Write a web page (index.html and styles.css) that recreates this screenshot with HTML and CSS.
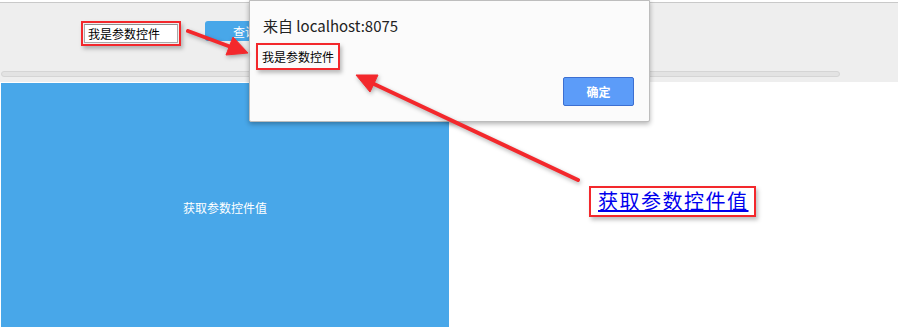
FILE: index.html
```html
<!DOCTYPE html>
<html lang="zh-CN">
<head>
    <meta charset="UTF-8">
    <title>获取参数控件值</title>
    <link rel="stylesheet" href="styles.css">
</head>
<body>

    <div class="toolbar">
        <div class="param-row">
            <span class="mark mark-input">
                <input type="text" class="param-input" value="我是参数控件">
            </span>
            <button class="query-btn">查询</button>
        </div>
        <div class="track"></div>
    </div>

    <div class="content">
        <div class="panel">获取参数控件值</div>
        <div class="link-area">
            <span class="mark mark-link"><a href="#">获取参数控件值</a></span>
        </div>
    </div>

    <!-- 浏览器 alert 弹窗 -->
    <div class="dialog">
        <div class="dialog-title">来自 localhost:8075</div>
        <div class="dialog-msg"><span class="mark mark-msg">我是参数控件</span></div>
        <div class="dialog-foot">
            <button class="ok-btn">确定</button>
        </div>
    </div>

    <!-- 标注箭头 -->
    <svg class="arrows" width="898" height="327" viewBox="0 0 898 327">
        <g fill="#f3282c" stroke="#f3282c">
            <line x1="188" y1="31" x2="231" y2="47" stroke-width="4" stroke-linecap="round"/>
            <polygon points="248,53 226,55 233,37" stroke-width="1"/>
            <line x1="578" y1="180" x2="374" y2="84" stroke-width="4" stroke-linecap="round"/>
            <polygon points="356,75 378,75 370,92" stroke-width="1"/>
        </g>
    </svg>

</body>
</html>
```

FILE: styles.css
```css
body {
    margin: 0;
    font-family: "Noto Sans CJK SC", "Noto Sans", sans-serif;
    background-color: #fff;
    width: 898px;
    height: 327px;
    overflow: hidden;
    position: relative;
}

/* 顶部参数栏 */
.toolbar {
    background-color: #eeeeee;
    border-top: 1px solid #c9c9c9;
    margin-top: 2px;
    height: 80px;
    box-sizing: border-box;
    padding-top: 18px;
}

.param-row {
    display: flex;
    align-items: flex-start;
    padding-left: 81px;
    height: 27px;
}

.mark {
    border: 2px solid #f3282c;
    box-shadow: 2px 3px 4px rgba(0, 0, 0, 0.25);
    display: inline-block;
}

.mark-input {
    padding: 0 1px;
}

.param-input {
    display: block;
    width: 94px;
    height: 19px;
    margin: 1px 0;
    padding: 0 3px;
    box-sizing: border-box;
    border: 1px solid #a9a9a9;
    border-top-color: #8f8f8f;
    font-family: "Noto Sans CJK SC", sans-serif;
    font-size: 12px;
    color: #000;
    outline: none;
}

.query-btn {
    margin-left: 24px;
    width: 80px;
    height: 20px;
    border: none;
    border-radius: 3px;
    background-color: #48a7e9;
    color: #fff;
    font-family: "Noto Sans CJK SC", sans-serif;
    font-size: 12px;
    padding: 0;
}

.track {
    margin: 23px 0 0 1px;
    width: 839px;
    height: 6px;
    box-sizing: border-box;
    background-color: #e3e3e3;
    border: 1px solid #d5d5d5;
    border-radius: 3px;
}

/* 内容区 */
.content {
    display: flex;
    margin-top: 1px;
}

.panel {
    margin-left: 1px;
    width: 448px;
    height: 248px;
    background-color: #48a7e9;
    color: #fff;
    font-size: 12px;
    display: flex;
    align-items: center;
    justify-content: center;
}

.link-area {
    padding: 103px 0 0 140px;
}

.mark-link {
    padding: 0 5px 0 7px;
    height: 27px;
    line-height: 26px;
}

.mark-link a {
    font-family: "Noto Sans CJK SC", sans-serif;
    font-size: 20px;
    color: #0000ee;
    letter-spacing: 1.5px;
}

/* 弹窗 */
.dialog {
    position: absolute;
    left: 249px;
    top: 0;
    width: 401px;
    height: 122px;
    box-sizing: border-box;
    background-color: #fbfbfb;
    border: 1px solid #bdbdbd;
    border-radius: 0 0 2px 2px;
    box-shadow: 0 2px 5px rgba(0, 0, 0, 0.3);
    padding: 14px 15px 0 6px;
}

.dialog-title {
    font-size: 15px;
    color: #222;
    padding-left: 7px;
    height: 28px;
}

.dialog-msg {
    height: 34px;
}

.mark-msg {
    font-size: 12px;
    color: #000;
    padding: 0 4px;
    height: 23px;
    line-height: 23px;
}

.dialog-foot {
    display: flex;
    justify-content: flex-end;
}

.ok-btn {
    width: 71px;
    height: 29px;
    background-color: #5c9cf9;
    border: 1px solid #3c6fd1;
    border-radius: 2px;
    color: #fff;
    font-family: "Noto Sans CJK SC", sans-serif;
    font-size: 12px;
    font-weight: bold;
}

.arrows {
    position: absolute;
    left: 0;
    top: 0;
    filter: drop-shadow(1px 2px 2px rgba(0, 0, 0, 0.3));
}
```
